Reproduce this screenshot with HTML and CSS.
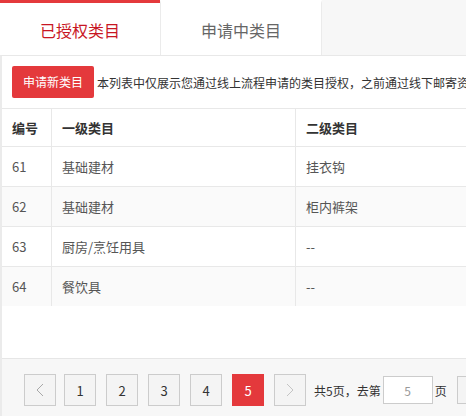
FILE: index.html
```html
<!DOCTYPE html>
<html lang="zh-CN">
<head>
<meta charset="utf-8">
<title>类目管理</title>
<link rel="stylesheet" href="styles.css">
</head>
<body>
<div class="page">
  <div class="tabs">
    <div class="tab active">已授权类目</div>
    <div class="tab second">申请中类目</div>
  </div>
  <div class="panel">
    <div class="toolbar">
      <button class="btn-apply">申请新类目</button>
      <span class="desc">本列表中仅展示您通过线上流程申请的类目授权，之前通过线下邮寄资质申请的类目授权请联系类目运营进行查询</span>
    </div>
    <table class="grid">
      <colgroup>
        <col class="c1">
        <col class="c2">
        <col class="c3">
      </colgroup>
      <thead>
        <tr><th>编号</th><th class="bl">一级类目</th><th class="bl">二级类目</th></tr>
      </thead>
      <tbody>
        <tr><td>61</td><td class="bl">基础建材</td><td class="bl">挂衣钩</td></tr>
        <tr class="alt"><td>62</td><td class="bl">基础建材</td><td class="bl">柜内裤架</td></tr>
        <tr><td>63</td><td class="bl">厨房/烹饪用具</td><td class="bl">--</td></tr>
        <tr class="alt"><td>64</td><td class="bl">餐饮具</td><td class="bl">--</td></tr>
      </tbody>
    </table>
    <div class="spacer"></div>
    <div class="pager">
      <span class="pbtn arrow"><svg width="8" height="14" viewBox="0 0 8 14"><polyline points="7,1 1,7 7,13" fill="none" stroke="#a8a8a8" stroke-width="1"/></svg></span>
      <span class="pbtn">1</span>
      <span class="pbtn">2</span>
      <span class="pbtn">3</span>
      <span class="pbtn">4</span>
      <span class="pbtn current">5</span>
      <span class="pbtn arrow"><svg width="8" height="14" viewBox="0 0 8 14"><polyline points="1,1 7,7 1,13" fill="none" stroke="#c4c4c4" stroke-width="1"/></svg></span>
      <span class="ptext">共5页，去第</span>
      <input class="pinput" type="text" value="5">
      <span class="ptext after">页</span>
      <button class="pgo">确定</button>
    </div>
  </div>
</div>
</body>
</html>
```
FILE: styles.css
```css
html, body {
  margin: 0;
  padding: 0;
  background: #ffffff;
  overflow: hidden;
}
body {
  font-family: "Noto Sans CJK SC", "Microsoft YaHei", sans-serif;
}
.page {
  width: 900px;
}
.tabs {
  display: flex;
  height: 55px;
  background: #f7f7f7;
}
.tab {
  box-sizing: border-box;
  width: 160px;
  height: 55px;
  background: #ffffff;
  border-top: 3px solid #ffffff;
  padding-top: 2px;
  display: flex;
  align-items: center;
  justify-content: center;
  font-size: 16px;
  color: #666666;
}
.tab.active {
  border-top-color: #e4393c;
  color: #c81623;
}
.tab.second {
  width: 162px;
  border-left: 1px solid #ebebeb;
  border-right: 1px solid #ebebeb;
}
.panel {
  border-top: 1px solid #e8e8e8;
  border-left: 2px solid #ebebeb;
  background: #ffffff;
}
.toolbar {
  display: flex;
  align-items: center;
  padding: 10px 0 10px 10px;
}
.btn-apply {
  height: 32px;
  padding: 0 11px;
  border: none;
  border-radius: 2px;
  background: #e4393c;
  color: #ffffff;
  font-family: inherit;
  font-size: 12px;
  line-height: 32px;
}
.desc {
  margin-left: 3px;
  font-size: 12px;
  color: #333333;
  white-space: nowrap;
}
.grid {
  width: 100%;
  table-layout: fixed;
  border-collapse: separate;
  border-spacing: 0;
}
.c1 { width: 49px; }
.c2 { width: 244px; }
.grid th,
.grid td {
  box-sizing: border-box;
  border-top: 1px solid #e8e8e8;
  padding: 0 10px;
  text-align: left;
  font-size: 13px;
}
.grid th {
  height: 38px;
  color: #333333;
  font-weight: 700;
}
.grid td {
  height: 40px;
  color: #555555;
}
.grid .bl {
  border-left: 1px solid #e8e8e8;
}
.grid tr.alt td {
  background: #fafafa;
}
.spacer {
  height: 52px;
}
.pager {
  display: flex;
  align-items: center;
  border-top: 1px solid #e6e6e6;
  background: #f7f7f7;
  padding: 15px 0 20px 22px;
}
.pbtn {
  box-sizing: border-box;
  width: 32px;
  height: 32px;
  margin-right: 10px;
  border: 1px solid #cccccc;
  background: #f4f4f4;
  color: #333333;
  font-size: 13px;
  display: flex;
  align-items: center;
  justify-content: center;
}
.pbtn.current {
  background: #e4393c;
  border-color: #e4393c;
  color: #ffffff;
}
.pbtn.arrow {
  margin-right: 8px;
}
.ptext {
  font-size: 12px;
  color: #333333;
  white-space: nowrap;
}
.pinput {
  box-sizing: border-box;
  width: 50px;
  height: 28px;
  margin: 0 2px 0 2px;
  border: 1px solid #cccccc;
  background: #ffffff;
  color: #999999;
  text-align: center;
  font-family: inherit;
  font-size: 12px;
  padding: 0;
}
.ptext.after {
  margin-right: 10px;
}
.pgo {
  box-sizing: border-box;
  height: 28px;
  padding: 0 12px;
  border: 1px solid #cccccc;
  background: #f4f4f4;
  color: #333333;
  font-family: inherit;
  font-size: 12px;
}
```
